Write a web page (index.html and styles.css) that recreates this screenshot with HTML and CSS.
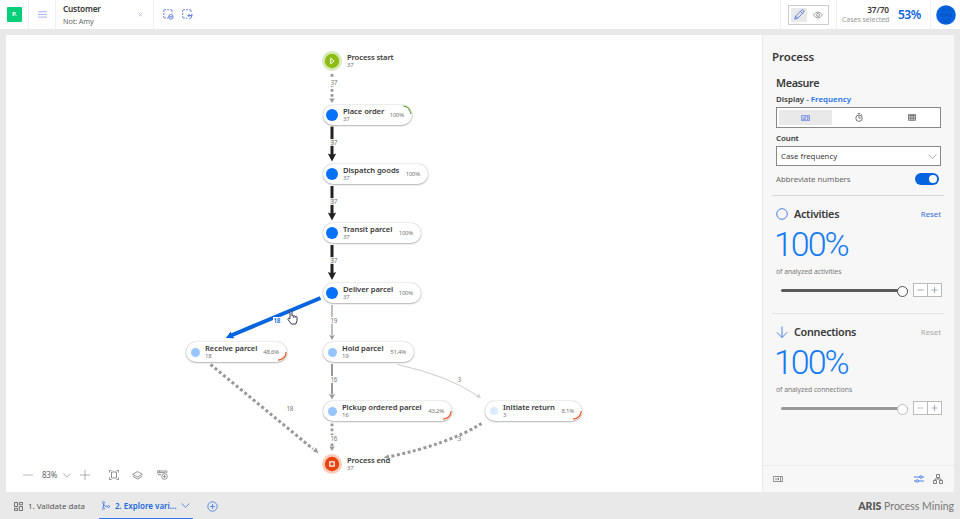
FILE: index.html
```html
<!DOCTYPE html>
<html lang="en">
<head>
<meta charset="utf-8">
<title>ARIS Process Mining</title>
<link rel="stylesheet" href="styles.css">
</head>
<body>
<header class="topbar">
  <div class="brand"><span class="logo">P.</span></div>
  <div class="menu"><svg width="9" height="7" viewBox="0 0 9 7" stroke="#a5b1ec" stroke-width="1"><path d="M0 .7h9M0 3.4h9M0 6.1h9"/></svg></div>
  <div class="filter">
    <div class="filter-text"><b class="filter-name">Customer</b><span class="filter-value">Not: Amy</span></div>
    <svg width="5" height="5" viewBox="0 0 5 5" stroke="#a9b3d2" stroke-width=".7"><path d="M.7.7l3.6 3.6M4.3.7L.7 4.3"/></svg>
  </div>
  <div class="filter-tools">
    <svg width="11" height="11" viewBox="0 0 11 11" fill="none" stroke="#4668d8"><path d="M.7 3V1.7q0-1 1-1H3M4 .7h2M7 .7h1q1 0 1 1V3M.7 4v2M.7 7v1q0 1 1 1H3M9 4v.7M4 9.2h1" stroke-width=".8"/><circle cx="7.8" cy="7.9" r="2.3" stroke-width=".8"/><path d="M6.2 7.9h3.2"/></svg>
    <svg width="11" height="11" viewBox="0 0 11 11" fill="none" stroke="#4668d8"><path d="M.7 3V1.7q0-1 1-1H3M4 .7h2M7 .7h1q1 0 1 1V3M.7 4v2M.7 7v1q0 1 1 1H3M4 9.200h1.500" stroke-width=".8"/><path d="M6 6.600h3.500q1-.9 0-1.800M6 6.600l1.400-1.400M6 6.600L7.400 8M10 6q.1 3-2.700 4" stroke-width=".9"/></svg>
  </div>
  <div class="mode">
    <div class="mode-box">
      <span class="mode-edit"><svg width="11" height="11" viewBox="0 0 11 11" fill="none" stroke="#3f63dc" stroke-width=".8"><path d="M.8 10.100l.8-3L7.500 1.200q1.200-.9 2 0t.1 2L3.700 9.200zM6.400 2.300l2.200 2.200M1.600 7.100l2.100 2.100"/></svg></span>
      <svg width="10" height="8" viewBox="0 0 10 8" fill="none" stroke="#777" stroke-width=".7"><path d="M.5 4Q5-2 9.500 4 5 10 .5 4z"/><circle cx="5" cy="4" r="1.500"/></svg>
    </div>
  </div>
  <div class="cases">
    <div class="cases-text"><b class="cases-count">37/70</b><span class="cases-label">Cases selected</span></div>
    <b class="cases-share">53%</b>
  </div>
  <div class="user"><svg width="20" height="20" viewBox="0 0 20 20"><circle cx="10" cy="10" r="9.800" fill="#0861df"/><path d="M5 6q5-3 10 0M4.500 9h4.800v2H4.500zM10.700 9h4.800v2h-4.800zM5 14q5 3 10 0M7 17h6" fill="none" stroke="#0a4fb4" stroke-width=".7"/></svg></div>
</header>

<main class="workspace">
  <section class="canvas">
    <svg class="edges" width="756" height="457" viewBox="6 35 756 457" fill="none">
      <g stroke="#999" stroke-width="2.800" stroke-dasharray="2.800 2.200">
        <path d="M332 74V98"/><path d="M332 423.500V446"/>
      </g>
      <path d="M329.300 98.500h5.400l-2.700 4.500zM329.300 446.500h5.400l-2.700 4.500z" fill="#999"/>
      <g stroke="#222" stroke-width="3"><path d="M332 126.500V156M332 186V215M332 245V274.500"/></g>
      <path d="M327.800 153.500q4.200 2 8.400 0l-4.200 8zM327.800 212.500q4.200 2 8.400 0l-4.200 8zM327.800 272q4.200 2 8.400 0l-4.200 8z" fill="#222"/>
      <path d="M332 305V335" stroke="#999" stroke-width="1.300"/><path d="M332 364V394" stroke="#999" stroke-width="2"/>
      <path d="M329.200 335q2.800 1 5.600 0l-2.800 5zM329 394q3 1 6 0l-3 5.500z" fill="#999"/>
      <path d="M320.500 298L231 335.500" stroke="#0764df" stroke-width="4"/>
      <path d="M225.800 338l5-6.600.8 3.800 3 3.100z" fill="#0764df"/>
      <path d="M210.500 364.500L313 449" stroke="#999" stroke-width="3" stroke-dasharray="3 2.500"/>
      <path d="M318.500 453l-5.500-1.500 3-4z" fill="#999"/>
      <path d="M397.500 364.500Q449 376 477 395.500" stroke="#ccc" stroke-width="1"/>
      <path d="M481 398l-4.800-.8 2.500-3.500z" fill="#ccc"/>
      <path d="M481.500 423.500Q449 444 388 457" stroke="#999" stroke-width="3" stroke-dasharray="3 2.500"/>
      <path d="M383.500 457.500l5-3 .8 4.500z" fill="#999"/>
    </svg>

    <span class="count c-start">37</span>
    <span class="count c-place">37</span>
    <span class="count c-dispatch">37</span>
    <span class="count c-transit">37</span>
    <span class="count c-hold">19</span>
    <span class="count c-pickup">16</span>
    <span class="count c-end">16</span>
    <span class="count c-receive">18</span>
    <span class="count c-side">18</span>
    <span class="count c-return">3</span>
    <span class="count c-back">3</span>

    <div class="terminal t-start">
      <svg width="20" height="20" viewBox="0 0 20 20"><circle cx="10" cy="10" r="10" fill="#d9e9b8"/><circle cx="10" cy="10" r="7.200" fill="#8bbd13"/><path d="M8.700 7.200v5.600l3.400-2.800z" fill="none" stroke="#fff"/></svg>
      <div class="label"><b>Process start</b><span>37</span></div>
    </div>
    <div class="node n-place"><i class="dot"></i><div class="label"><b>Place order</b><span>37</span></div><em>100%</em><svg class="arc arc-top" width="9" height="10" viewBox="0 0 9 10"><path d="M.5 1Q6.500 1.500 8 9" fill="none" stroke="#5d9d2c" stroke-width="1.200"/></svg></div>
    <div class="node n-dispatch"><i class="dot"></i><div class="label"><b>Dispatch goods</b><span>37</span></div><em>100%</em></div>
    <div class="node n-transit"><i class="dot"></i><div class="label"><b>Transit parcel</b><span>37</span></div><em>100%</em></div>
    <div class="node n-deliver"><i class="dot"></i><div class="label"><b>Deliver parcel</b><span>37</span></div><em>100%</em></div>
    <div class="node n-receive"><i class="dot mid"></i><div class="label"><b>Receive parcel</b><span>18</span></div><em>48.6%</em><svg class="arc" width="9" height="9" viewBox="0 0 9 9"><path d="M8.200 0Q7.500 7.500 0 8.200" fill="none" stroke="#ef5a26" stroke-width="1.200"/></svg></div>
    <div class="node n-hold"><i class="dot mid"></i><div class="label"><b>Hold parcel</b><span>19</span></div><em>51.4%</em></div>
    <div class="node n-pickup"><i class="dot mid"></i><div class="label"><b>Pickup ordered parcel</b><span>16</span></div><em>43.2%</em><svg class="arc" width="9" height="9" viewBox="0 0 9 9"><path d="M8.200 0Q7.500 7.500 0 8.200" fill="none" stroke="#ef5a26" stroke-width="1.200"/></svg></div>
    <div class="node n-return"><i class="dot pale"></i><div class="label"><b>Initiate return</b><span>3</span></div><em>8.1%</em><svg class="arc" width="9" height="9" viewBox="0 0 9 9"><path d="M8.200 0Q7.500 7.500 0 8.200" fill="none" stroke="#ef5a26" stroke-width="1.200"/></svg></div>
    <div class="terminal t-end">
      <svg width="20" height="20" viewBox="0 0 20 20"><circle cx="10" cy="10" r="10" fill="#fbcbbb"/><circle cx="10" cy="10" r="7.200" fill="#ea430c"/><path d="M7.800 7.800h4.400v4.400H7.800z" fill="none" stroke="#fff" stroke-width="1.200"/></svg>
      <div class="label"><b>Process end</b><span>37</span></div>
    </div>
    <svg class="hand" width="11" height="15" viewBox="0 0 11 15"><path d="M3 8.800V2q0-1.300 1-1.300T5 2v4q.9-1 1.600.1.900-.8 1.600.3 1.700-.7 1.800 1v3.200L8.800 14H4.400L1 9.500q-.4-1.300.7-1.300z" fill="#fff" stroke="#222440" stroke-width=".9"/><path d="M6.600 6.200V8M8.200 6.600V8" stroke="#222440" stroke-width=".7"/></svg>

    <div class="zoombar">
      <svg width="10" height="10" viewBox="0 0 10 10" stroke="#aaa" stroke-width=".8"><path d="M0 5h10"/></svg>
      <span class="zoom-level">83%</span>
      <svg class="z-chevron" width="8" height="5" viewBox="0 0 8 5" fill="none" stroke="#999" stroke-width=".8"><path d="M.4.5L4 4.300 7.600.5"/></svg>
      <svg class="z-plus" width="10" height="10" viewBox="0 0 10 10" stroke="#999" stroke-width=".8"><path d="M0 5h10M5 0v10"/></svg>
      <svg class="z-fit" width="10" height="10" viewBox="0 0 10 10" fill="none" stroke="#777" stroke-width=".8"><path d="M.5 2.500v-2h2M7.500.5h2v2M9.500 7.500v2h-2M2.500 9.500h-2v-2M2.500 2h5v6h-5z"/></svg>
      <svg class="z-layer" width="11" height="9" viewBox="0 0 11 9" fill="none" stroke="#777" stroke-width=".8"><path d="M.7 3.300L5.500.6l4.800 2.700-4.800 2.700zM.7 5.300L5.500 8l4.800-2.700"/></svg>
      <svg class="z-path" width="11" height="10" viewBox="0 0 11 10" fill="none" stroke="#777" stroke-width=".8"><path d="M2.600 1h7.200v2.300M2.600 2.600h6M.6.8h2v2h-2zM.7 3.800q0 1 1.500 1H4"/><circle cx="7.500" cy="6.500" r="2.800"/><path d="M7.500 5.100v2.800M6.200 6.500h2.600"/></svg>
    </div>
  </section>

  <aside class="panel">
    <div class="panel-body">
      <h1 class="title">Process</h1>
      <section class="measure">
        <h2 class="heading">Measure</h2>
        <p class="display">Display <span>- Frequency</span></p>
        <div class="segments">
          <span class="seg on"><svg width="9" height="6" viewBox="0 0 9 6" fill="none" stroke="#5876e4" stroke-width=".7"><path d="M.4.4h8.200v5.200H.4zM2.200 1.500v3M1.500 4.500h1.300M3.500 1.600h1.300V3H3.500v1.500h1.300M5.800 1.600h1.300v2.900H5.800M5.800 3h1.300"/></svg></span>
          <span class="seg"><svg width="8" height="9" viewBox="0 0 8 9" fill="none" stroke="#555" stroke-width=".8"><circle cx="4" cy="5.200" r="3.200"/><path d="M2.800.6h2.400M6 1.300l1.200 1M4 5.200V2.800M4 5.200h1.700"/></svg></span>
          <span class="seg"><svg width="8" height="7" viewBox="0 0 8 7" fill="none" stroke="#555" stroke-width=".7"><path d="M.5.700h7v5.600h-7zM.5 1.300h7M.5 3h7M.5 4.700h7M2.800.5v6M5.200.5v6"/></svg></span>
        </div>
        <p class="count-label">Count</p>
        <div class="select"><span>Case frequency</span><svg width="9" height="5" viewBox="0 0 9 5" fill="none" stroke="#999" stroke-width=".8"><path d="M.5.5l4 3.800 4-3.800"/></svg></div>
        <div class="toggle-row"><span>Abbreviate numbers</span><i class="toggle"></i></div>
      </section>
      <section class="metric">
        <div class="metric-head"><svg width="12" height="12" viewBox="0 0 12 12" fill="none" stroke="#3b75e7" stroke-width=".9"><circle cx="6" cy="6" r="5.300"/></svg><h2>Activities</h2><span class="reset">Reset</span></div>
        <div class="big">100%</div>
        <p class="note">of analyzed activities</p>
        <div class="slider-row"><i class="track"></i><span class="stepper"><svg width="13" height="12" viewBox="0 0 13 12" stroke="#999" stroke-width=".9"><path d="M3.500 6h6"/></svg><svg width="13" height="12" viewBox="0 0 13 12" stroke="#96a4b8" stroke-width=".9"><path d="M3.500 6h6M6.500 3v6"/></svg></span></div>
      </section>
      <section class="metric second">
        <div class="metric-head"><svg width="12" height="12" viewBox="0 0 12 12" fill="none" stroke="#3b75e7" stroke-width=".9"><path d="M6 .5v11M.8 6.300L6 11.500l5.200-5.200"/></svg><h2>Connections</h2><span class="reset off">Reset</span></div>
        <div class="big">100%</div>
        <p class="note">of analyzed connections</p>
        <div class="slider-row muted"><i class="track"></i><span class="stepper"><svg width="13" height="12" viewBox="0 0 13 12" stroke="#bbb" stroke-width=".9"><path d="M3.500 6h6"/></svg><svg width="13" height="12" viewBox="0 0 13 12" stroke="#96a4b8" stroke-width=".9"><path d="M3.500 6h6M6.500 3v6"/></svg></span></div>
      </section>
    </div>
    <div class="panel-foot">
      <svg width="10" height="6" viewBox="0 0 10 6" fill="none" stroke="#666" stroke-width=".7"><path d="M.4.5h9.200v5H.4zM7.600.5v5M2 3h4M4.700 1.700L6 3 4.700 4.300"/></svg>
      <svg class="foot-sliders" width="10" height="8" viewBox="0 0 10 8" fill="none" stroke="#3b75e7" stroke-width=".9"><path d="M0 2h5.500M8.300 2H10M0 6h1.800M4.600 6H10"/><circle cx="6.900" cy="2" r="1.300"/><circle cx="3.200" cy="6" r="1.300"/></svg>
      <svg width="10" height="10" viewBox="0 0 10 10" fill="none" stroke="#666" stroke-width=".8"><path d="M3.500.5h3v3h-3zM.5 6.500h3v3h-3zM6.500 6.500h3v3h-3zM5 3.500V5M2 6.500V5h6v1.500"/></svg>
    </div>
  </aside>
</main>

<footer class="tabs">
  <div class="tab"><svg width="9" height="9" viewBox="0 0 9 9" fill="none" stroke="#555" stroke-width=".8"><path d="M.5.5h3v4h-3zM5.300.5h3.200v2.200H5.300zM.5 6.300h3v2.200h-3zM5.300 4.500h3.200v4H5.300z"/></svg><span>1. Validate data</span></div>
  <div class="tab active"><svg width="8" height="9" viewBox="0 0 8 9" fill="none" stroke="#3b75e7" stroke-width=".8"><circle cx="1.500" cy="1.500" r="1"/><circle cx="1.500" cy="7.500" r="1"/><circle cx="6.500" cy="5.500" r="1"/><path d="M1.500 2.500v4M1.500 3q.5 2.500 4 2.500"/></svg><span>2. Explore vari...</span><svg class="tab-chevron" width="9" height="5" viewBox="0 0 9 5" fill="none" stroke="#3b75e7" stroke-width=".8"><path d="M.5.5l4 3.800 4-3.800"/></svg></div>
  <svg class="add" width="11" height="11" viewBox="0 0 11 11" fill="none" stroke="#3b75e7" stroke-width=".8"><circle cx="5.500" cy="5.500" r="4.700"/><path d="M3 5.500h5M5.500 3v5"/></svg>
  <div class="product"><b>ARIS</b> Process Mining</div>
</footer>
</body>
</html>
```
FILE: styles.css
```css
* { box-sizing: border-box; }
body { margin: 0; width: 960px; height: 519px; overflow: hidden; display: flex; flex-direction: column; background: #e9e9e9; color: #3a3a3a; font: 8px/10px "Noto Sans", "Open Sans", sans-serif; }
h1, h2, p { margin: 0; }
svg { display: block; flex: none; }
i, em { font-style: normal; }
b, h1, h2 { font-weight: 600; }

.topbar { height: 29px; flex: none; display: flex; background: #fff; }
.topbar > div { display: flex; align-items: center; border-right: 1px solid #f0f0f0; }
.brand { width: 29px; padding-left: 7px; }
.logo { width: 15px; height: 15px; border-radius: 1px; background: #07ce78; color: #fff; font-size: 6px; line-height: 15px; font-weight: 700; letter-spacing: .3px; text-align: center; }
.menu { width: 27px; padding-left: 9px; }
.filter { width: 98px; padding: 0 10px 0 7px; justify-content: space-between; }
.filter-text, .cases-text { display: flex; flex-direction: column; }
.filter-text { margin-top: 1px; line-height: 12px; }
.filter-name { font-size: 8.3px; letter-spacing: -.25px; }
.filter-value { font-size: 7.3px; color: #666; letter-spacing: -.15px; }
.topbar > .filter-tools { gap: 8px; padding-left: 9px; border: 0; flex: 1; }
.mode { width: 57px; padding-left: 7px; border-left: 1px solid #f0f0f0; }
.mode-box { width: 41px; height: 20px; border: 1px solid #ccc; padding-left: 2px; display: flex; align-items: center; gap: 6px; }
.mode-edit { width: 16px; height: 14px; background: #e9e9e9; display: flex; align-items: center; justify-content: center; }
.cases { width: 94px; padding-left: 5px; gap: 9px; }
.cases-text { width: 47px; text-align: right; white-space: nowrap; }
.cases-count { font-size: 8.3px; letter-spacing: -.1px; }
.cases-label { font-size: 7px; color: #999; letter-spacing: -.05px; }
.cases-share { font-size: 12px; color: #0b63df; letter-spacing: -.5px; }
.topbar > .user { width: 29px; padding-left: 5px; border: 0; }

.workspace { height: 457px; margin: 6px 6px 0; flex: none; display: flex; gap: 1px; }
.canvas { position: relative; width: 756px; background: #fff; }
.edges { position: absolute; inset: 0; }
.count { position: absolute; padding: 0 .5px; font-size: 6.3px; line-height: 7px; color: #777; background: #fff; letter-spacing: -.25px; }
.c-start { left: 324px; top: 44px; }
.c-place { left: 324px; top: 104px; }
.c-dispatch { left: 324px; top: 163px; }
.c-transit { left: 324px; top: 222px; }
.c-place, .c-dispatch, .c-transit { background: #fffd; }
.c-hold { left: 324px; top: 282px; }
.c-pickup { left: 324px; top: 341px; }
.c-end { left: 324px; top: 400px; }
.c-receive { left: 267px; top: 282px; color: #0764df; font-weight: 600; }
.c-side { left: 280px; top: 370px; }
.c-return { left: 451px; top: 341px; }
.c-back { left: 451px; top: 400px; background: none; }

.label { display: flex; flex-direction: column; white-space: nowrap; }
.label b { font-size: 7.6px; line-height: 9px; letter-spacing: -.05px; }
.label span { font-size: 6px; line-height: 6px; color: #777; letter-spacing: -.2px; }
.terminal { position: absolute; left: 316px; display: flex; gap: 5px; }
.t-start { top: 16px; }
.t-end { top: 419px; }
.terminal .label { margin-top: 2px; }
.terminal b { letter-spacing: -.1px; }
.node { position: absolute; height: 20px; display: flex; align-items: center; padding: 0 8px 0 3px; border-radius: 10px; background: #fff; box-shadow: 0 0 1.500px #aaa, 0 1px 1.500px #bbb; }
.node .label { margin: -2px 0 0 5px; width: 0; flex: 1; }
.node em { font-size: 6px; line-height: 8px; color: #777; letter-spacing: -.25px; margin-top: -1px; }
.dot { width: 12px; height: 12px; border-radius: 50%; background: #0871fa; flex: none; }
.mid, .pale { width: 9px; height: 9px; margin-left: 2px; background: #99c5ff; }
.pale { background: #dcebfc; width: 8px; height: 8px; }
.arc { position: absolute; right: 0; bottom: 1px; }
.arc-top { top: 0; bottom: auto; }
.n-place { left: 317px; top: 70px; width: 89px; }
.n-dispatch { left: 317px; top: 129px; width: 105px; }
.n-transit { left: 317px; top: 188px; width: 98px; }
.n-deliver { left: 317px; top: 248px; width: 98px; }
.n-receive { left: 180px; top: 307px; width: 101px; }
.n-hold { left: 317px; top: 307px; width: 91px; }
.n-pickup { left: 317px; top: 366px; width: 129px; }
.n-return { left: 479px; top: 366px; width: 97px; }
.hand { position: absolute; left: 281px; top: 275px; }

.zoombar { position: absolute; left: 17px; top: 434px; height: 12px; display: flex; align-items: center; color: #666; }
.zoom-level { width: 17px; margin-left: 9px; font-size: 8px; letter-spacing: -.25px; }
.z-chevron { margin-left: 4px; }
.z-plus { margin-left: 9px; }
.z-fit { margin-left: 19px; }
.z-layer { margin-left: 13px; }
.z-path { margin-left: 14px; }

.panel { width: 191px; background: #f7f7f7; display: flex; flex-direction: column; }
.panel-body { height: 430px; padding: 13px 10px 0 9px; }
.title { font-size: 11.5px; line-height: 17px; letter-spacing: -.1px; }
.measure { padding: 10px 3px 0 4px; height: 131px; border-bottom: 1px solid #d8d8d8; }
.heading { font-size: 10.8px; line-height: 16px; letter-spacing: -.35px; }
.display, .count-label { font-size: 7.9px; line-height: 10px; font-weight: 600; }
.display { margin-top: 3px; letter-spacing: .02px; }
.display span { color: #176fed; }
.segments { height: 21px; margin-top: 3px; padding: 2px; border: 1px solid #888; background: #fff; display: grid; grid-template-columns: 1fr 1fr 1fr; }
.seg { display: flex; align-items: center; justify-content: center; }
.seg.on { background: #e9e9e9; height: 15px; }
.count-label { margin-top: 5px; letter-spacing: -.1px; }
.select { height: 20px; margin-top: 3px; padding: 0 3px 0 4px; border: 1px solid #888; background: #fff; display: flex; align-items: center; justify-content: space-between; font-size: 7.8px; }
.toggle-row { display: flex; align-items: center; justify-content: space-between; height: 12px; margin: 7px 2px 0 0; font-size: 7.8px; color: #666; }
.toggle { width: 24px; height: 12px; border-radius: 6px; background: #0764df; display: flex; align-items: center; justify-content: flex-end; padding-right: 2px; }
.toggle::after { content: ""; width: 8px; height: 8px; border-radius: 50%; background: #fff; }
.metric { height: 118px; padding: 9px 3px 0 4px; border-bottom: 1px solid #e4e4e4; }
.second { border: 0; }
.metric-head { height: 18px; display: flex; align-items: center; }
.metric-head h2 { flex: 1; margin-left: 6px; font-size: 10.8px; line-height: 16px; letter-spacing: -.3px; }
.reset { font-size: 7.8px; color: #346ee0; }
.off { color: #aaa; }
.big { height: 42px; font: 300 34px/42px Roboto, sans-serif; color: #147af5; letter-spacing: -2px; margin-left: -2px; }
.note { margin-top: 2px; font-size: 6.8px; line-height: 10px; color: #777; letter-spacing: -.03px; }
.slider-row { height: 14px; margin: 6px -1px 0 0; padding-left: 5px; display: flex; align-items: center; justify-content: space-between; }
.track { position: relative; width: 127px; height: 3px; border-radius: 2px; background: #5c5c5c; }
.track::after { content: ""; position: absolute; right: 0; top: -3px; width: 9px; height: 9px; border-radius: 50%; border: 1.500px solid #555; background: #fff; }
.muted .track { background: #999; }
.muted .track::after { border-color: #bbb; }
.stepper { width: 29px; height: 14px; display: flex; border: 1px solid #bbb; background: #fff; }
.stepper svg + svg { border-left: 1px solid #bbb; width: 14px; }
.panel-foot { height: 27px; border-top: 1px solid #ebebeb; padding: 0 11px 0 10px; display: flex; align-items: center; gap: 9px; }
.foot-sliders { margin-left: auto; }

.tabs { flex: 1; display: flex; align-items: stretch; padding: 0 6px 0 14px; color: #555; }
.tab { display: flex; align-items: center; font-size: 7.9px; padding-top: 1px; white-space: nowrap; }
.tab > span { margin-left: 5px; }
.active { width: 94px; margin-left: 14px; padding-left: 3px; color: #2168dd; font-weight: 600; border-bottom: 1.500px solid #2d7ae5; font-size: 8px; }
.tab-chevron { margin-left: 5px; }
.add { margin: 9px 0 0 14px; }
.product { margin: 7px 0 0 auto; font: 10.500px/15px Lato, sans-serif; color: #777; white-space: nowrap; }
.product b { font-weight: 900; color: #555; }
```
